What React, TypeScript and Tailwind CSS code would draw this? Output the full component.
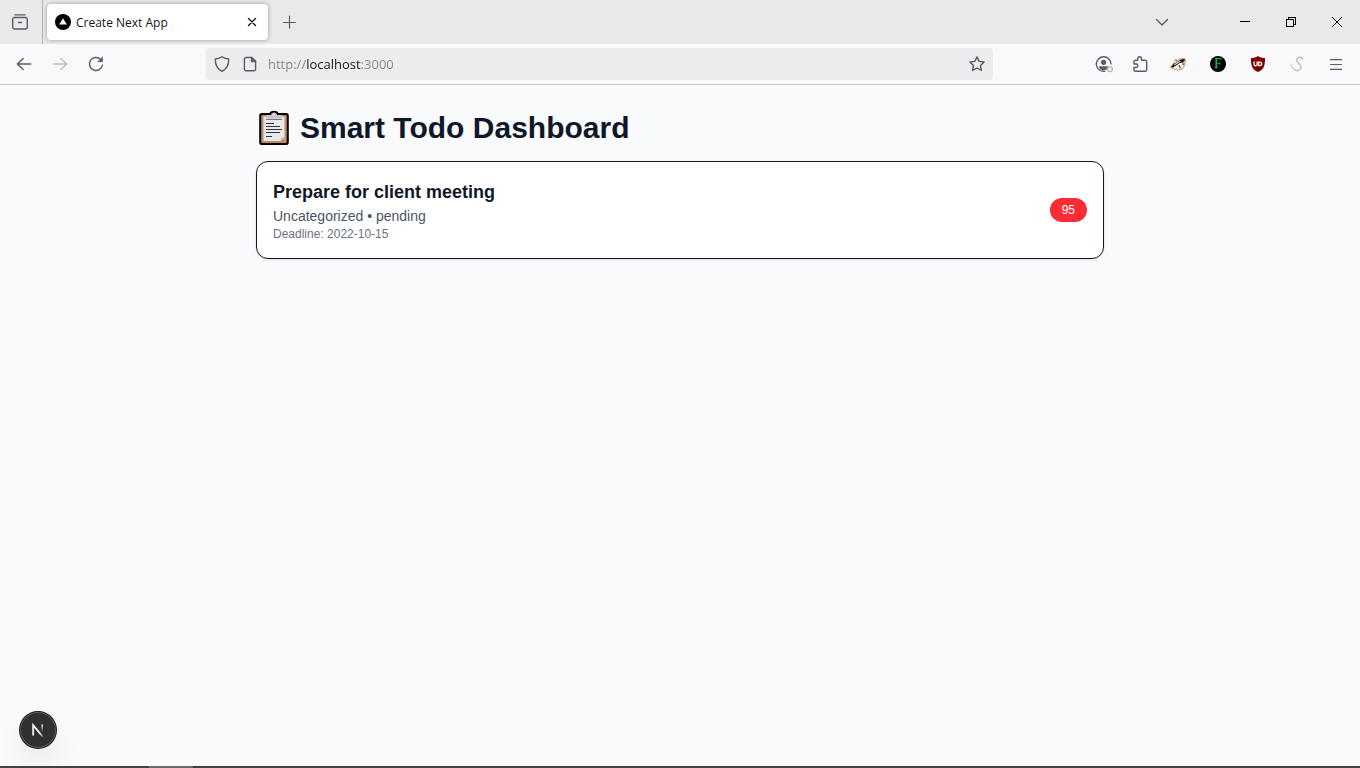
import React, { useState } from "react";

type GlyphProps = { children: React.ReactNode; className?: string };

function Glyph({ children, className = "text-[#5b5b66]" }: GlyphProps) {
  return (
    <svg
      viewBox="0 0 16 16"
      className={`size-4 shrink-0 ${className}`}
      fill="none"
      stroke="currentColor"
      strokeWidth="1.4"
      strokeLinecap="round"
      strokeLinejoin="round"
      aria-hidden="true"
    >
      {children}
    </svg>
  );
}

function ToolButton({
  label,
  width = "w-9",
  children,
}: {
  label: string;
  width?: string;
  children: React.ReactNode;
}) {
  return (
    <button type="button" aria-label={label} className={`flex h-8 shrink-0 items-center justify-center ${width}`}>
      {children}
    </button>
  );
}

function TabBar() {
  return (
    <div className="flex h-11 items-center bg-[#e9e9eb]">
      <div className="flex h-11 w-[43px] shrink-0 items-center justify-center border-r border-[#b4b4b8] pr-0.5">
        <ToolButton label="View recent browsing">
          <Glyph>
            <path d="M3 .9h10" />
            <path d="M2.5 3.5h11a1.9 1.9 0 0 1 1.8 1.9v7.7a1.9 1.9 0 0 1-1.8 1.9h-11A1.9 1.9 0 0 1 .7 13.1V5.4a1.9 1.9 0 0 1 1.8-1.900z" />
            <path d="M6.500 8.500h3" />
          </Glyph>
        </ToolButton>
      </div>
      <div className="ml-1 flex h-9 w-[221px] items-center rounded bg-white px-2 shadow-[0_0_4px_rgba(0,0,0,0.35)]">
        <svg viewBox="0 0 16 16" className="size-4 shrink-0" aria-hidden="true">
          <circle cx="8" cy="8" r="8" fill="#000" />
          <path d="M8 4.200l3.900 6.400H4.100z" fill="#fff" />
        </svg>
        <span className="ml-[5px] flex-1 pt-0.5 whitespace-nowrap font-['Open_Sans','Noto_Sans',sans-serif] text-xs text-[#15141a]">
          Create Next App
        </span>
        <button type="button" aria-label="Close tab" className="flex size-4 items-center justify-center">
          <Glyph className="text-[#15141a]">
            <path d="M4.500 4.500l7 7M11.500 4.500l-7 7" />
          </Glyph>
        </button>
      </div>
      <div className="ml-1 flex-1">
        <ToolButton label="Open a new tab">
          <Glyph>
            <path d="M7.500 2v12M1.500 8.500h12" strokeWidth="1.200" />
          </Glyph>
        </ToolButton>
      </div>
      <div className="mr-10.5">
        <ToolButton label="List all tabs">
          <Glyph>
            <path d="M2.500 5.500L8 11l5.500-5.500" />
          </Glyph>
        </ToolButton>
      </div>
      <ToolButton label="Minimize" width="w-[46px]">
        <svg viewBox="0 0 10 10" className="size-2.5" aria-hidden="true">
          <path d="M0 4.500h10" stroke="#000" strokeWidth="1" shapeRendering="crispEdges" />
        </svg>
      </ToolButton>
      <ToolButton label="Restore" width="w-[46px]">
        <svg viewBox="0 0 10 10" className="size-2.5" fill="none" stroke="#000" shapeRendering="crispEdges" aria-hidden="true">
          <path d="M.5 2.500h7v7h-7zM2.500 2.500v-2h7v7h-2" />
        </svg>
      </ToolButton>
      <ToolButton label="Close" width="w-[46px]">
        <svg viewBox="0 0 10 10" className="size-2.5" fill="none" stroke="#000" aria-hidden="true">
          <path d="M0 0l10 10M10 0L0 10" />
        </svg>
      </ToolButton>
    </div>
  );
}

function AddressBar() {
  const [url, setUrl] = useState("http://localhost:3000");
  return (
    <div className="mr-[93px] ml-[92px] flex h-8 min-w-0 flex-1 items-center rounded bg-[#ececee] px-0.5">
      <ToolButton label="Tracking protection" width="w-7">
        <Glyph>
          <path d="M8 .7c2.100 1.500 4.200 2.200 6.700 2.300.2 5.200-1.700 9.900-6.700 12.300C3 12.900 1.100 8.200 1.300 3c2.500-.1 4.600-.8 6.700-2.300z" />
        </Glyph>
      </ToolButton>
      <ToolButton label="Site information" width="w-7">
        <Glyph>
          <path d="M9.600 1.500H3.900a1.500 1.500 0 0 0-1.500 1.500v10.200a1.500 1.500 0 0 0 1.500 1.500h8.200a1.500 1.500 0 0 0 1.500-1.500V5.500z" />
          <path d="M9.600 1.500v4h4z" fill="currentColor" />
        </Glyph>
      </ToolButton>
      <input
        type="text"
        aria-label="Search or enter address"
        value={url}
        onChange={(e) => setUrl(e.target.value)}
        className="ml-1 min-w-0 flex-1 bg-[linear-gradient(to_right,#85858c_38px,#15141a_38px,#15141a_93px,#85858c_93px)] bg-clip-text pt-0.5 font-['Open_Sans','Noto_Sans',sans-serif] text-[13px] text-transparent caret-black outline-none"
      />
      <ToolButton label="Bookmark this page" width="w-7">
        <Glyph>
          <path d="M8 .9l2.150 4.500 4.950.65-3.600 3.450.9 4.900L8 12l-4.400 2.400.9-4.900L.9 6.050l4.950-.65z" />
        </Glyph>
      </ToolButton>
    </div>
  );
}

function Toolbar() {
  return (
    <div className="flex h-[41px] items-center border-b border-[#cccccf] bg-[#f9f9fb] px-1.5">
      <ToolButton label="Back">
        <Glyph>
          <path d="M1.300 8h13.400M7.200 2.400L1.300 8l5.900 5.600" />
        </Glyph>
      </ToolButton>
      <ToolButton label="Forward">
        <Glyph className="text-[#bdbdc2]">
          <path d="M14.700 8H1.300M8.800 2.400L14.700 8l-5.900 5.600" />
        </Glyph>
      </ToolButton>
      <ToolButton label="Reload">
        <Glyph>
          <path d="M14.400 9A6.500 6.500 0 1 1 12.500 3.300L14 4.800" />
          <path d="M14.500 1.200v4.500H10z" fill="currentColor" strokeWidth=".6" />
        </Glyph>
      </ToolButton>
      <AddressBar />
      <ToolButton label="Account">
        <svg viewBox="0 0 18 17" className="h-[17px] w-[18px]" fill="none" aria-hidden="true">
          <path d="M10.200 15.200A7.300 7.300 0 1 1 15.900 8.500" stroke="#5b5b66" strokeWidth="1.400" />
          <circle cx="8.600" cy="6.300" r="2.600" fill="#5b5b66" />
          <path d="M4 10.300h9.200c0 2.700-2 4.100-4.600 4.100S4 13 4 10.300z" fill="#5b5b66" />
          <circle cx="15" cy="13.200" r="2.400" fill="#f9f9fb" stroke="#b5b5ba" strokeWidth="1.300" />
        </svg>
      </ToolButton>
      <ToolButton label="Extensions">
        <Glyph>
          <path d="M5.700 4.200V2.700a1.900 1.900 0 0 1 3.800 0v1.500h3.700a1.500 1.500 0 0 1 1.500 1.500v8a1.500 1.500 0 0 1-1.500 1.500H3.400a1.500 1.500 0 0 1-1.500-1.500v-2.200h2.200a1.700 1.700 0 0 0 0-3.500H1.900V5.700a1.500 1.500 0 0 1 1.500-1.500z" />
        </Glyph>
      </ToolButton>
      <ToolButton label="Privacy Badger" width="w-10">
        <svg viewBox="0 0 16 16" className="size-4" aria-hidden="true">
          <path d="M.5 11.500L4 6.800 5.500 3.500l2.300.8L10.500 3l4.200-.5.8 2.200-1 2.300.2 2.500-2.700 3.500-4.700 1-4.300-1.500z" fill="#fff" stroke="#e08a45" strokeWidth="1" />
          <path d="M.8 11.300l2.600-3.200 3.800-2.200 3.600-2.500 3.700-.4.4 1.800-2.400 1.600-3.200.8-3 2.300-3.100 1.900z" fill="#17130f" />
          <path d="M3.600 8.900l3.200-2.400 2.900-1.500 1.300.3-3.300 2.100-3.300 2.100z" fill="#d7d3cf" />
          <path d="M6 11.600l3.200-2.500 3.300-1.300 1 1.200-2.400 2.700-3.500.7z" fill="#ece8e4" />
          <path d="M8.900 9l1.600 3.300M12.800 6.300l.6 2.900M5.700 4.200l1.400 1.200" stroke="#17130f" strokeWidth=".9" />
        </svg>
      </ToolButton>
      <ToolButton label="Font finder" width="w-10">
        <span className="flex size-4 items-center justify-center rounded-full bg-black font-['Liberation_Serif',serif] text-sm leading-4 text-[#0fd178]">
          F
        </span>
      </ToolButton>
      <ToolButton label="uBlock Origin" width="w-10">
        <svg viewBox="0 0 16 16" className="size-4" aria-hidden="true">
          <path d="M8 0c2 1.400 4.500 2 7 2 0 7.500-.8 11.400-7 14C1.800 13.400 1 9.500 1 2c2.500 0 5-.6 7-2z" fill="#800000" />
          <path d="M4.100 5.400v2.800a1.550 1.550 0 0 0 3.100 0V5.400" fill="none" stroke="#fff" strokeWidth="1.300" />
          <path d="M8.700 6.100h1.200a1.800 1.800 0 0 1 0 3.600H8.700z" fill="none" stroke="#fff" strokeWidth="1.300" />
        </svg>
      </ToolButton>
      <ToolButton label="Stylus" width="w-10">
        <svg viewBox="0 0 16 16" className="size-4" fill="none" strokeLinecap="round" aria-hidden="true">
          <path d="M12.300 3.400C12.500 1.200 10 .7 8.200 1.900 5.500 3.700 6.500 5.700 8.500 7.200c2.600 2 3.300 4.300 1.500 6.200-1.500 1.500-3.900 1.700-5.100.4" stroke="#c9b3a4" strokeWidth="1.300" />
          <path d="M.6 8.200c.7 2.500 2.300 4.200 4.300 5.600" stroke="#ddd5d0" strokeWidth="1.600" />
        </svg>
      </ToolButton>
      <ToolButton label="Open application menu">
        <svg viewBox="0 0 12 11" className="h-[11px] w-3" stroke="#5b5b66" aria-hidden="true">
          <path d="M0 .6h12M0 5.500h12M0 10.400h12" strokeWidth="1.200" />
        </svg>
      </ToolButton>
    </div>
  );
}

function Clipboard() {
  return (
    <svg viewBox="0 0 36 36" className="size-9 shrink-0" aria-hidden="true">
      <path d="M6 3h7.500C14.300 1.500 15.800.7 18 .7s3.700.8 4.500 2.300H30a2.800 2.800 0 0 1 2.800 2.800v26.400A2.800 2.800 0 0 1 30 35H6a2.800 2.800 0 0 1-2.800-2.800V5.800A2.800 2.800 0 0 1 6 3z" fill="#000" />
      <rect x="5.200" y="5" width="25.600" height="28" rx="1.200" fill="#bd8b62" />
      <path d="M7.500 6.500H28.500V31H7.500z" fill="#e9e9eb" />
      <path d="M24.500 31h4V27z" fill="#bd8b62" />
      <path d="M24.500 31v-4h4z" fill="#cfcfd1" />
      <path d="M10 8.500V6.500c0-1 .7-1.500 1.700-1.500H15c.2-1.600 1.300-2.500 3-2.500s2.800.9 3 2.500h3.300c1 0 1.700.5 1.700 1.500v2z" fill="#c6c6c9" />
      <circle cx="18" cy="5" r="1" fill="#e8e8ea" />
      <path d="M10 9.500h16" stroke="#77777b" strokeWidth="1" />
      <path d="M10 13.500h8M10 16.500h14M10 19.500h16M10 22.500h14M10 26.500h6" stroke="#333338" strokeWidth="1.100" />
    </svg>
  );
}

function NextBadge() {
  return (
    <button
      type="button"
      aria-label="Open Next.js Dev Tools"
      className="fixed bottom-5 left-5 flex size-9 items-center justify-center rounded-full bg-[#303030] shadow-[0_0_0_1px_#171717,inset_0_0_0_1px_#5a5a5a,0_16px_32px_-8px_rgba(0,0,0,0.24)]"
    >
      <svg viewBox="0 0 14 14" className="size-3.5" fill="none" aria-hidden="true">
        <defs>
          <linearGradient id="diagonal" x1="5" y1="5" x2="13" y2="14" gradientUnits="userSpaceOnUse">
            <stop offset=".5" stopColor="#fff" />
            <stop offset="1" stopColor="#fff" stopOpacity="0.1" />
          </linearGradient>
          <linearGradient id="stem" x1="11" y1="1" x2="11" y2="9" gradientUnits="userSpaceOnUse">
            <stop stopColor="#fff" />
            <stop offset="1" stopColor="#fff" stopOpacity="0" />
          </linearGradient>
        </defs>
        <path d="M2.200 12.500V2.200L12 14" stroke="url(#diagonal)" strokeWidth="1.800" />
        <path d="M11.200 1.500v8" stroke="url(#stem)" strokeWidth="1.600" />
      </svg>
    </button>
  );
}

export default function App() {
  return (
    <div className="flex min-h-screen flex-col bg-[#f9fafb] font-['Liberation_Sans',Arial,sans-serif]">
      <header>
        <TabBar />
        <Toolbar />
      </header>
      <main className="mx-auto w-full max-w-4xl flex-1 px-6 pt-[25px] pb-6">
        <h1 className="mb-[15px] flex gap-2 text-3xl font-bold text-[#101828]">
          <Clipboard />
          Smart Todo Dashboard
        </h1>
        <article className="flex items-center justify-between rounded-xl border border-[#101828] bg-white p-4 shadow-sm">
          <div>
            <h2 className="text-lg font-semibold text-[#101828]">Prepare for client meeting</h2>
            <p className="text-sm text-[#4a5565]">Uncategorized • pending</p>
            <p className="text-xs text-[#6a7282]">Deadline: 2022-10-15</p>
          </div>
          <span className="rounded-full bg-[#fb2c36] px-3 py-1 text-xs text-white">95</span>
        </article>
      </main>
      <NextBadge />
      <footer className="flex h-0.5 bg-[#434343]">
        <div className="ml-[149px] w-[45px] border-r border-[#333333] bg-[#6b6b6b]" />
      </footer>
    </div>
  );
}
